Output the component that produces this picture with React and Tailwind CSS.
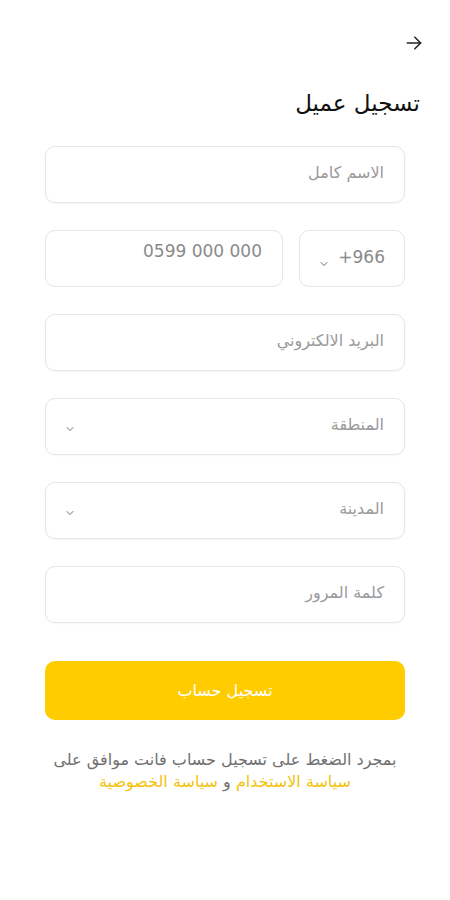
import React from 'react'

const Chevron = ({ className }) => (
	<svg
		className={className}
		width="12"
		height="12"
		viewBox="0 0 24 24"
		fill="none"
		stroke="#6b7280"
		strokeWidth="2"
		strokeLinecap="round"
		strokeLinejoin="round"
	>
		<path d="M6 9l6 6 6-6" />
	</svg>
)

const Field = ({ placeholder, select }) => (
	<div className="h-[57px] rounded-[10px] border border-[#e6e6e6] bg-white flex items-start justify-between px-5 pt-[14px] shadow-[0_1px_2px_rgba(0,0,0,0.04)]">
		<span className="text-[16px] text-[#9a9a9a]">{placeholder}</span>
		{select && <Chevron className="mt-[10px] -ml-[2px]" />}
	</div>
)

const App = () => {
	return (
		<div
			dir="rtl"
			className="w-[450px] h-[900px] bg-white"
			style={{ fontFamily: '"DejaVu Sans", "Noto Sans", sans-serif' }}
		>
			<div className="flex justify-end pt-[33px] pl-[26px] pr-[26px]" dir="ltr">
				<svg width="20" height="20" viewBox="0 0 24 24" fill="none" stroke="#222" strokeWidth="1.8" strokeLinecap="round" strokeLinejoin="round">
					<path d="M4 12h16" />
					<path d="M13 5l7 7-7 7" />
				</svg>
			</div>

			<h1 className="pr-[30px] mt-[39px] text-[23px] text-[#111] leading-none">تسجيل عميل</h1>

			<div className="px-[45px] mt-[31px] flex flex-col gap-[27px]">
				<Field placeholder="الاسم كامل" />

				<div className="flex gap-4">
					<div className="w-[106px] h-[57px] rounded-[10px] border border-[#e6e6e6] flex items-start justify-between pr-[19px] pl-[18px] pt-[14px]">
						<span className="text-[17px] text-[#8a8a8a]" dir="ltr">+966</span>
						<Chevron className="mt-[13px]" />
					</div>
					<div className="flex-1 h-[57px] rounded-[10px] border border-[#e6e6e6] flex items-start px-5 pt-[8px]">
						<span className="text-[17px] text-[#8a8a8a]" dir="ltr">0599 000 000</span>
					</div>
				</div>

				<Field placeholder="البريد الالكتروني" />
				<Field placeholder="المنطقة" select />
				<Field placeholder="المدينة" select />
				<Field placeholder="كلمة المرور" />

				<button className="mt-[11px] h-[59px] rounded-[10px] bg-[#ffcc00] text-white text-[16px]">
					تسجيل حساب
				</button>

				<p className="mt-[2px] -mx-[10px] text-center text-[16px] leading-[22px] text-[#707070]">
					بمجرد الضغط على تسجيل حساب فانت موافق على
					<br />
					<span className="text-[#f4c20d]">سياسة الاستخدام</span> و{' '}
					<span className="text-[#f4c20d]">سياسة الخصوصية</span>
				</p>
			</div>
		</div>
	)
}

export default App
